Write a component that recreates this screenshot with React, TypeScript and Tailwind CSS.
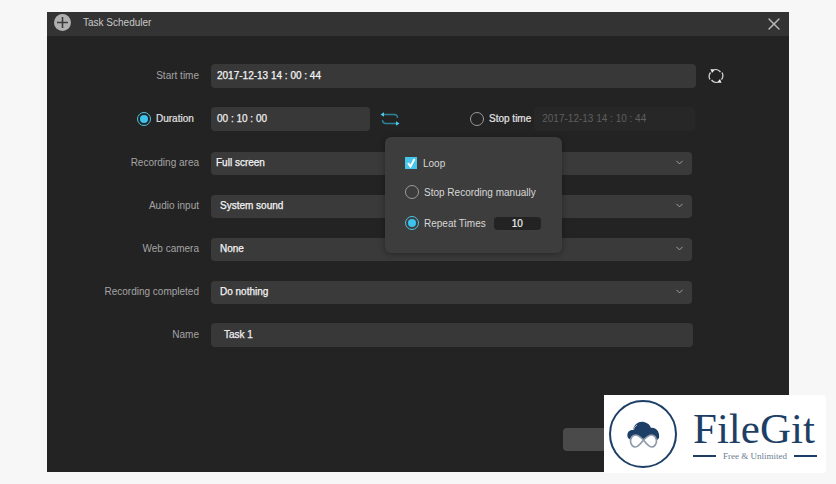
import React from "react";
import { ChevronDown, X } from "lucide-react";

const Radio = ({ on }: { on?: boolean }) =>
  on ? (
    <span className="flex h-[14px] w-[14px] shrink-0 items-center justify-center rounded-full border border-[#4cc4e4]">
      <span className="h-[8px] w-[8px] rounded-full bg-[#3cc4ee]" />
    </span>
  ) : (
    <span className="block h-[14px] w-[14px] shrink-0 rounded-full border border-[#9a9a9a]" />
  );

const Swap = () => (
  <svg width="20" height="16" viewBox="0 0 20 16" fill="none" stroke="#2c8298" strokeWidth="1.5">
    <path d="M3 3.500h11c2 0 3.500 1 3.500 3.500M17 12.500H6c-2 0-3.500-1-3.500-3.500" />
    <path d="M0.500 3.500l3.500-2.200v4.400z" fill="#4cc8ea" stroke="none" />
    <path d="M19.500 12.500l-3.500-2.200v4.400z" fill="#4cc8ea" stroke="none" />
  </svg>
);

const Row = ({ label, children, mb = "mb-[19px]" }: { label?: string; children: React.ReactNode; mb?: string }) => (
  <div className={`flex h-6 items-center ${mb}`}>
    <div className="w-[152px] shrink-0 pb-px text-right text-[#a3a3a3]">{label}</div>
    <div className="ml-3 flex min-w-0 flex-1 items-center">{children}</div>
  </div>
);

const Select = ({ value, pad = "pl-[9px]" }: { value: string; pad?: string }) => (
  <div className={`flex h-[23px] w-[481px] items-center justify-between rounded bg-[#3a3a3a] pr-[7px] pb-px ${pad} text-[#f4f4f4] [-webkit-text-stroke:0.25px]`}>
    <span>{value}</span>
    <ChevronDown size={11} className="text-[#a8a8a8]" />
  </div>
);

export default function App() {
  return (
    <div className="h-[484px] w-[836px] overflow-hidden bg-[#f7f7f7] pt-3 pl-[47px] font-['Liberation_Sans',sans-serif] text-[10px]">
      <div className="relative h-[460px] w-[742px] bg-[#232323]">
        <div className="flex h-6 items-center justify-between bg-[#333333] pr-[5px] pb-[3px] pl-[7px]">
          <div className="flex items-center gap-3">
            <span className="flex h-[17px] w-[17px] items-center justify-center rounded-full bg-[#b0b0b0]">
              <svg width="11" height="11" viewBox="0 0 11 11" stroke="#3a3a3a" strokeWidth="1.6">
                <path d="M5.500 0v11M0 5.500h11" />
              </svg>
            </span>
            <span className="text-[#c8c8c8]">Task Scheduler</span>
          </div>
          <X size={20} strokeWidth={1.7} className="mt-[2px] text-[#b8b8b8]" />
        </div>

        <div className="pt-7">
          <Row label="Start time">
            <div className="flex h-6 w-[485px] items-center rounded bg-[#383838] pb-px pl-1.5 text-[#f4f4f4] [-webkit-text-stroke:0.25px]">
              2017-12-13 14 : 00 : 44
            </div>
            <svg className="ml-[12px]" width="16" height="16" viewBox="0 0 16 16" fill="none" stroke="#cfcfcf" strokeWidth="1.300">
              <path d="M4 2.500a6.500 6.500 0 0 1 8.500 1.500M12 13.500a6.500 6.500 0 0 1-8.500-1.500M2 11.500a6.500 6.500 0 0 1 .5-7M14 4.500a6.500 6.500 0 0 1-.5 7" />
              <path d="M2.500 1l4 1-2.500 3z" fill="#f0f0f0" stroke="none" />
              <path d="M13.500 15l-4-1 2.500-3z" fill="#f0f0f0" stroke="none" />
            </svg>
          </Row>

          <div className="mb-5 flex h-6 items-center">
            <div className="flex w-[152px] shrink-0 items-center pl-[90px]">
              <Radio on />
              <span className="ml-[5px] pb-px text-[#e0e0e0] [-webkit-text-stroke:0.2px]">Duration</span>
            </div>
            <div className="ml-3 flex h-6 w-[159px] items-center rounded bg-[#383838] pb-px pl-1.5 text-[#ededed] [-webkit-text-stroke:0.25px]">
              00 : 10 : 00
            </div>
            <span className="ml-[10px] flex w-[20px]">
              <Swap />
            </span>
            <span className="ml-[70px] flex">
              <Radio />
            </span>
            <span className="ml-[5px] pb-px text-[#e4e4e4] [-webkit-text-stroke:0.2px]">Stop time</span>
            <div className="ml-[3px] flex h-6 w-[161px] items-center rounded bg-[#272727] pb-px pl-2 text-[#5f5f5f]">
              2017-12-13 14 : 10 : 44
            </div>
          </div>

          <Row label="Recording area">
            <Select value="Full screen" pad="pl-[5px]" />
          </Row>
          <Row label="Audio input">
            <Select value="System sound" />
          </Row>
          <Row label="Web camera">
            <Select value="None" />
          </Row>
          <Row label="Recording completed">
            <Select value="Do nothing" />
          </Row>
          <Row label="Name" mb="mb-0">
            <div className="flex h-6 w-[482px] items-center rounded bg-[#383838] pb-px pl-[13px] text-[#f0f0f0] [-webkit-text-stroke:0.25px]">
              Task 1
            </div>
          </Row>
        </div>

        {/* loop popup */}
        <div className="absolute top-[125px] left-[338px] h-[116px] w-[177px] rounded-md bg-[#3d3d3d] pt-[20px] pl-5 text-[#d8d8d8] shadow-[0_1px_6px_rgba(0,0,0,0.35)]">
          <div className="flex h-3 items-center">
            <span className="flex h-3 w-3 items-center justify-center bg-[#45c6ec]">
              <svg width="10" height="10" viewBox="0 0 10 10" fill="none" stroke="#ffffff" strokeWidth="2">
                <path d="M2 5l2.500 3.500L8.500 1" />
              </svg>
            </span>
            <span className="ml-[6px]">Loop</span>
          </div>
          <div className="mt-[16px] flex h-[14px] items-center">
            <Radio />
            <span className="ml-[5px]">Stop Recording manually</span>
          </div>
          <div className="mt-[17px] flex h-[14px] items-center">
            <Radio on />
            <span className="ml-[5px]">Repeat Times</span>
            <span className="ml-[8px] flex h-[13px] w-[47px] items-center justify-center rounded-sm bg-[#232323] text-[#f0f0f0] [-webkit-text-stroke:0.2px]">
              10
            </span>
          </div>
        </div>

        {/* button behind watermark */}
        <div className="absolute top-[416px] left-[516px] h-[23px] w-[60px] rounded bg-[#4a4a4a]" />

        {/* watermark */}
        <div className="absolute top-[383px] left-[557px] flex h-[78px] w-[222px] items-center rounded-r-sm bg-white pl-[5px]">
          <span className="flex h-[68px] w-[68px] items-center justify-center rounded-full border-2 border-[#1d3f66]">
            <svg width="33" height="28" viewBox="0 0 33 28">
              <path d="M1 18c-2-5 1-8 5-8 1-6 6-9 11-8 4 1 6 3 7 6 5-1 9 4 8 10l-3 3H5z" fill="#1d3f66" />
              <path d="M10 5c-2 1-3 3-3.500 5" fill="none" stroke="#ffffff" strokeWidth="0.7" />
              <path d="M16.500 20c-3-3-5-5-8-5s-5 3-5 6 2 6 5 6 5-3 8-7c3 4 5 7 8 7s5-3 5-6-2-6-5-6-5 2-8 5z" fill="#ffffff" stroke="#8f9bab" strokeWidth="1.700" />
            </svg>
          </span>
          <div className="ml-[16px] flex w-[124px] flex-col font-['Liberation_Serif',serif] text-[#1d3f66]">
            <span className="text-[43px] leading-[42px]">FileGit</span>
            <div className="mt-[2px] flex items-center justify-between">
              <span className="h-[2px] w-[23px] bg-[#1d3f66]" />
              <span className="text-[9px] leading-[9px] text-[#6b7d92]">Free &amp; Unlimited</span>
              <span className="h-[2px] w-[23px] bg-[#1d3f66]" />
            </div>
          </div>
        </div>
      </div>
    </div>
  );
}
